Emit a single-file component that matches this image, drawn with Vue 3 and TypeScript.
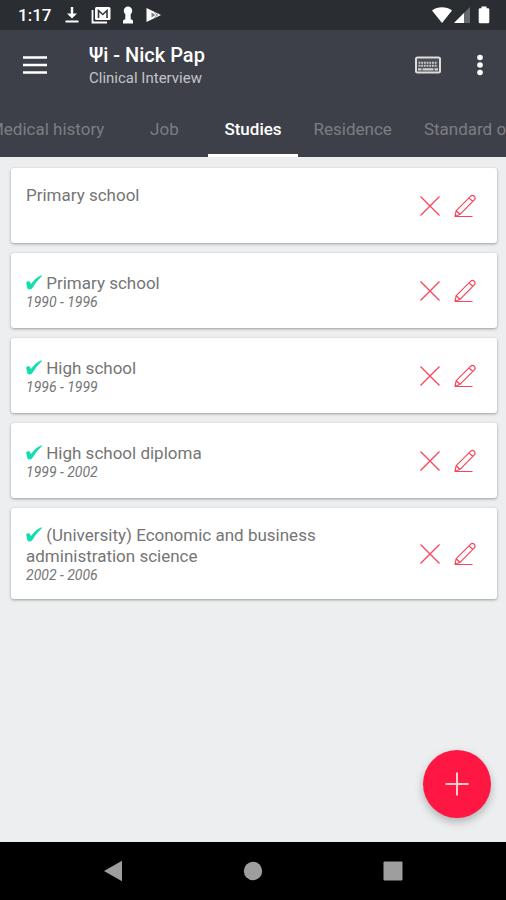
<script setup lang="ts">
import { nextTick, onMounted, ref } from 'vue'

interface Study {
  id: number
  title: string
  years?: string
}

const tabs: string[] = ['Medical history', 'Job', 'Studies', 'Residence', 'Standard of living']
const activeTab = ref<string>('Studies')
const tabBar = ref<HTMLElement | null>(null)

const studies = ref<Study[]>([
  { id: 1, title: 'Primary school' },
  { id: 2, title: 'Primary school', years: '1990 - 1996' },
  { id: 3, title: 'High school', years: '1996 - 1999' },
  { id: 4, title: 'High school diploma', years: '1999 - 2002' },
  { id: 5, title: '(University) Economic and business administration science', years: '2002 - 2006' },
])

function centreActiveTab(): void {
  const bar = tabBar.value
  const tab = bar?.querySelector<HTMLElement>('.tab.active')
  if (!bar || !tab) return
  const barBox = bar.getBoundingClientRect()
  const tabBox = tab.getBoundingClientRect()
  bar.scrollLeft += tabBox.left + tabBox.width / 2 - barBox.left - barBox.width / 2
}

async function selectTab(name: string): Promise<void> {
  activeTab.value = name
  await nextTick()
  centreActiveTab()
}

function removeStudy(id: number): void {
  studies.value = studies.value.filter((s) => s.id !== id)
}

onMounted(centreActiveTab)
</script>

<template>
  <div class="screen">
    <div class="status">
      <span class="clock">1:17</span>
      <svg class="status-icon" width="16" height="18" viewBox="0 0 16 18" aria-hidden="true">
        <path d="M6.8 1h2.4v6.5H13L8 12.5 3 7.500h3.800zM1.500 14.500h13v2h-13z" fill="#fff" />
      </svg>
      <svg class="status-icon mail" width="20" height="18" viewBox="0 0 20 18" aria-hidden="true">
        <path d="M1.500 4v12.500H16" fill="none" stroke="#fff" stroke-width="1.800" />
        <rect x="4" y="1" width="15.500" height="13" rx="1.500" fill="#fff" />
        <path d="M7.500 12V4.500l4.300 4 4.200-4V12" fill="none" stroke="#33373d" stroke-width="1.600" />
      </svg>
      <svg class="status-icon" width="12" height="18" viewBox="0 0 12 18" aria-hidden="true">
        <path d="M6 .5a4.200 4.200 0 0 1 4.200 4.200c0 1.500-.7 2.500-1.500 3.300V13l2.300 1.500V17.500H1v-3L3.300 13V8C2.500 7.200 1.800 6.200 1.800 4.700A4.200 4.200 0 0 1 6 .5z" fill="#fff" />
      </svg>
      <svg class="status-icon play" width="17" height="16" viewBox="0 0 17 16" aria-hidden="true">
        <path d="M1.500 1 16 8 1.500 15z" fill="#fff" />
        <path d="M6.500 5.500 10.500 8l-4 2.500z" fill="#777b80" />
        <path d="M9.500 5l3 4M9.500 11l3-4" stroke="#777b80" stroke-width=".8" fill="none" />
      </svg>
      <span class="spacer"></span>
      <svg width="22" height="18" viewBox="0 0 22 18" aria-hidden="true">
        <path d="M1 4.500C6.500.2 15.500.2 21 4.500L11 17z" fill="#fff" />
      </svg>
      <svg class="signal" width="16" height="16" viewBox="0 0 16 16" aria-hidden="true">
        <path d="M0 16 16 0v16z" fill="#66696d" />
        <path d="M0 16 10 6v10z" fill="#fff" />
      </svg>
      <svg class="battery" width="12" height="18" viewBox="0 0 12 18" aria-hidden="true">
        <path d="M3.500.5h5v1.800H10a1.300 1.300 0 0 1 1.300 1.300V16a1.300 1.300 0 0 1-1.300 1.300H2A1.300 1.300 0 0 1 .7 16V3.600A1.300 1.300 0 0 1 2 2.300h1.500z" fill="#fff" />
      </svg>
    </div>

    <header class="header">
      <div class="app-bar">
        <button class="icon-button" type="button" aria-label="Open menu">
          <svg width="24" height="18" viewBox="0 0 24 18">
            <path d="M0 1.500h24M0 9h24M0 16.500h24" stroke="#fff" stroke-width="2.600" />
          </svg>
        </button>
        <div class="titles">
          <h1>Ψi - Nick Pap</h1>
          <p>Clinical Interview</p>
        </div>
        <button class="icon-button keyboard" type="button" aria-label="Keyboard">
          <svg width="26" height="18" viewBox="0 0 26 18">
            <rect x="1" y="1.500" width="24" height="15" rx="1.500" fill="#4a4d55" stroke="#dcdcdc" stroke-width="2" />
            <path d="M3.500 6.800h19M3.500 9.800h19" stroke="#c8c8c8" stroke-width="1.900" stroke-dasharray="1.900 .8" />
            <path d="M3 13.400h3.500M7.500 13.400h11M19.500 13.400h3.500" stroke="#d0d0d0" stroke-width="2.200" />
          </svg>
        </button>
        <button class="icon-button more" type="button" aria-label="More options">
          <svg width="8" height="22" viewBox="0 0 8 22">
            <circle cx="4" cy="3.500" r="2.800" fill="#fff" />
            <circle cx="4" cy="11" r="2.800" fill="#fff" />
            <circle cx="4" cy="18.500" r="2.800" fill="#fff" />
          </svg>
        </button>
      </div>
      <nav ref="tabBar" class="tabs" role="tablist" aria-label="Interview sections">
        <button
          v-for="tab in tabs"
          :key="tab"
          class="tab"
          :class="{ active: tab === activeTab }"
          type="button"
          role="tab"
          :aria-selected="tab === activeTab"
          @click="selectTab(tab)"
        >
          {{ tab }}
        </button>
      </nav>
    </header>

    <main class="content">
      <ul class="cards">
        <li v-for="study in studies" :key="study.id" class="card">
          <div class="text" :class="{ plain: !study.years }">
            <h2>
              <svg v-if="study.years" class="check" width="16" height="15" viewBox="0 0 16 15" aria-hidden="true">
                <path d="M.2 7.800C1 6 3.600 5.800 4.300 7.700l.7 1.400C7.500 5.300 10.800 2 14.900.4c.9-.2 1.200.5.7 1C11.800 4.700 8.800 9 6.200 13.300c-1 1.500-4.200 1.500-4.800-.1z" fill="#12dfb0" />
              </svg>
              {{ study.title }}
            </h2>
            <p v-if="study.years">{{ study.years }}</p>
          </div>
          <div class="actions">
            <button type="button" aria-label="Delete" @click="removeStudy(study.id)">
              <svg width="22" height="22" viewBox="0 0 22 22">
                <path d="M1.500 1.500l19 19M20.500 1.500l-19 19" stroke="#f5455c" stroke-width="1.300" fill="none" />
              </svg>
            </button>
            <button type="button" aria-label="Edit">
              <svg width="24" height="24" viewBox="0 0 24 24" fill="none" stroke="#f5455c" stroke-width="1.200" stroke-linejoin="round">
                <path d="M2 22.500l1.200-5.800L17.500 2.400c1.300-1.300 2.700-1.100 3.700-.2s1.300 2.500.1 3.700L7 20.300zM3.200 16.700L7 20.300M16 3.900l3.800 3.600M2 22.500h17.500" />
              </svg>
            </button>
          </div>
        </li>
      </ul>
      <button class="fab" type="button" aria-label="Add study">
        <svg width="24" height="24" viewBox="0 0 24 24">
          <path d="M12 .5v23M.5 12h23" stroke="#ffc9d0" stroke-width="2" />
        </svg>
      </button>
    </main>

    <footer class="system-nav">
      <button type="button" aria-label="Back">
        <svg width="20" height="22" viewBox="0 0 20 22"><path d="M1 11 19 .8v20.400z" fill="#9e9e9e" /></svg>
      </button>
      <button type="button" aria-label="Home">
        <svg width="20" height="20" viewBox="0 0 20 20"><circle cx="10" cy="10" r="9.200" fill="#9e9e9e" /></svg>
      </button>
      <button type="button" aria-label="Recent apps">
        <svg width="20" height="20" viewBox="0 0 20 20"><rect x=".5" y=".5" width="19" height="19" rx="1" fill="#9e9e9e" /></svg>
      </button>
    </footer>
  </div>
</template>

<style>
body {
  margin: 0;
  background: #eceeef;
}
</style>

<style scoped>
.screen {
  display: flex;
  flex-direction: column;
  min-height: 100vh;
  font-family: Roboto, "Liberation Sans", sans-serif;
  background: #eceeef;
}

button {
  display: flex;
  align-items: center;
  justify-content: center;
  margin: 0;
  padding: 0;
  border: 0;
  background: none;
  font: inherit;
  color: inherit;
  cursor: pointer;
}

h1,
h2,
p,
ul {
  margin: 0;
  padding: 0;
}

svg {
  flex: none;
}

.status {
  display: flex;
  align-items: center;
  height: 30px;
  padding: 0 16px 0 18px;
  background: #2a2d32;
  color: #fff;
}

.clock {
  margin-right: 13px;
  font-size: 17px;
  font-weight: 500;
}

.status-icon {
  margin-right: 11px;
}

.spacer {
  flex: 1;
}

.signal {
  margin-left: 1px;
}

.battery {
  margin-left: 8px;
}

.header {
  background: #3d4048;
  color: #fff;
}

.app-bar {
  display: flex;
  align-items: center;
  height: 70px;
  padding: 0 16px 0 11px;
}

.icon-button {
  width: 48px;
  height: 48px;
}

.icon-button.more {
  width: 20px;
  margin-left: 18px;
}

.titles {
  flex: 1;
  padding: 1px 0 0 30px;
}

.titles h1 {
  font-size: 20px;
  font-weight: 500;
  line-height: 24px;
}

.titles p {
  font-size: 15px;
  line-height: 22px;
  color: #c3c4c7;
}

.tabs {
  display: flex;
  height: 57px;
  overflow-x: auto;
  scrollbar-width: none;
}

.tab {
  flex: none;
  min-width: 88px;
  padding: 3px 16px 0;
  border-bottom: 3px solid transparent;
  font-size: 17px;
  color: #7c7e82;
  white-space: nowrap;
}

.tab.active {
  border-bottom-color: #fff;
  font-weight: 500;
  color: #fff;
}

.content {
  position: relative;
  flex: 1;
  padding: 11px 9px 11px 11px;
}

.cards {
  display: flex;
  flex-direction: column;
  gap: 10px;
  list-style: none;
}

.card {
  display: flex;
  align-items: center;
  gap: 16px;
  box-sizing: border-box;
  min-height: 75px;
  padding: 17px 20px 16px 15px;
  border-radius: 3px;
  background: #fff;
  box-shadow: 0 1px 3px rgba(0, 0, 0, 0.35);
}

.text {
  flex: 1;
  color: #757575;
}

.text.plain {
  align-self: flex-start;
}

.text h2 {
  max-width: 310px;
  font-size: 17px;
  font-weight: 400;
  line-height: 21px;
}

.text p {
  font-size: 14px;
  font-style: italic;
  line-height: 16px;
}

.check {
  vertical-align: -1px;
}

.actions {
  display: flex;
  gap: 12px;
}

.fab {
  position: absolute;
  right: 15px;
  bottom: 24px;
  width: 68px;
  height: 68px;
  border-radius: 50%;
  background: #ff1744;
  box-shadow: 0 4px 8px rgba(0, 0, 0, 0.25);
}

.system-nav {
  display: flex;
  align-items: center;
  justify-content: center;
  gap: 92px;
  height: 58px;
  background: #000;
}

.system-nav button {
  width: 48px;
  height: 48px;
}
</style>
